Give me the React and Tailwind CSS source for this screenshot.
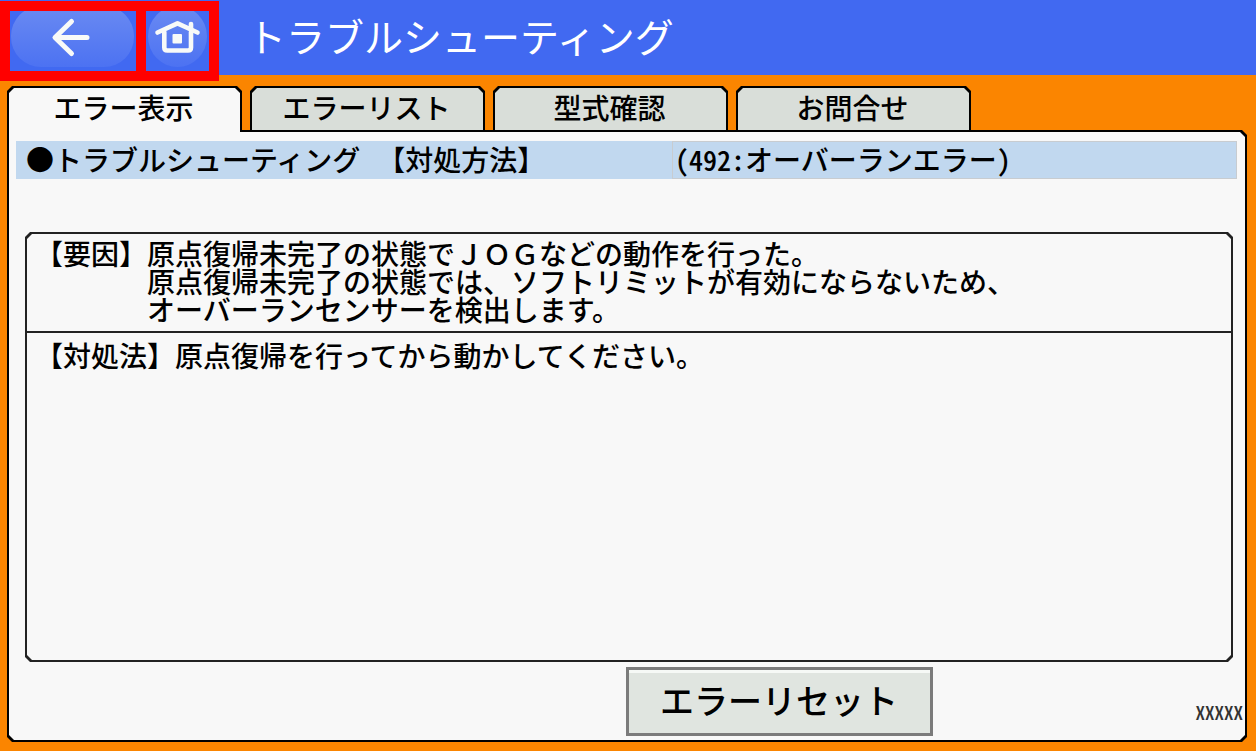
const TABS = ['エラー表示', 'エラーリスト', '型式確認', 'お問合せ'];

const OCTAGON =
  '[clip-path:polygon(5px_0,calc(100%-5px)_0,100%_5px,100%_calc(100%-5px),calc(100%-5px)_100%,5px_100%,0_calc(100%-5px),0_5px)]';
const PANEL_SHAPE =
  '[clip-path:polygon(0_0,calc(100%-5px)_0,100%_5px,100%_calc(100%-5px),calc(100%-5px)_100%,5px_100%,0_calc(100%-5px))]';
const TAB_SHAPE = '[clip-path:polygon(5px_0,calc(100%-5px)_0,100%_5px,100%_100%,0_100%,0_5px)]';

function BackIcon() {
  return (
    <svg viewBox="0 0 126 60" className="h-full w-full" aria-hidden="true">
      <defs>
        <linearGradient id="pill" x1="0" y1="0" x2="0" y2="1">
          <stop offset="0" stopColor="#6a8af2" />
          <stop offset="1" stopColor="#4c72f2" />
        </linearGradient>
      </defs>
      <rect x="1" y="-5" width="123" height="61" rx="30" fill="url(#pill)" />
      <path
        d="M61.500 10.500 45 26.500 61.500 42.500M46 26.500H77"
        fill="none"
        stroke="#f8faf8"
        strokeWidth="5"
        strokeLinecap="round"
        strokeLinejoin="round"
      />
    </svg>
  );
}

function HomeIcon() {
  return (
    <svg viewBox="0 0 63 60" className="h-full w-full" aria-hidden="true">
      <ellipse cx="31.500" cy="25.500" rx="29.500" ry="30.500" fill="url(#pill)" />
      <g fill="none" stroke="#f8faf8" strokeWidth="4.600" strokeLinecap="round" strokeLinejoin="round">
        <path d="M11.500 21.500 31.500 12.300 51.500 21.500" />
        <path d="M18.300 21V36.500Q18.300 39.500 21.300 39.500H42Q45 39.500 45 36.500V21" />
        <path d="M45 13V18" />
      </g>
      <rect x="26.500" y="23" width="9.500" height="9.500" rx="1" fill="#f8faf8" />
    </svg>
  );
}

function Tab({ label, active }) {
  return (
    <button
      type="button"
      role="tab"
      aria-selected={active}
      className={`h-[46px] w-[235px] bg-black px-[2px] pt-[2px] ${TAB_SHAPE} ${active ? '' : 'pb-[2px]'}`}
    >
      <span
        className={`flex h-full justify-center pr-[2px] text-[28px] leading-[38px] ${TAB_SHAPE} ${
          active ? 'bg-[#f8f8f8]' : 'bg-[#d9ded9]'
        }`}
      >
        {label}
      </span>
    </button>
  );
}

export default function App() {
  return (
    <div
      lang="ja"
      className="flex min-h-screen flex-col bg-[#fb8500] font-['Noto_Sans_CJK_JP',sans-serif] font-medium text-black [text-spacing-trim:space-all]"
    >
      <header className="flex h-[75px] items-start bg-[#4169f1]">
        <nav className="mt-px flex shrink-0 gap-[10px] bg-[#ff0000] p-[10px]">
          <button type="button" aria-label="戻る" className="h-[60px] w-[126px] bg-[#4169f1]">
            <BackIcon />
          </button>
          <button type="button" aria-label="ホーム" className="h-[60px] w-[63px] bg-[#4169f1]">
            <HomeIcon />
          </button>
        </nav>
        <h1 className="ml-7 text-[39px] leading-[70px] font-normal text-white">トラブルシューティング</h1>
      </header>

      <main className="flex grow flex-col pt-[11px] pr-[9px] pb-[9px] pl-[7px]">
        <div role="tablist" className="z-10 -mb-[2px] flex gap-2">
          {TABS.map((label, i) => (
            <Tab key={label} label={label} active={i === 0} />
          ))}
        </div>

        <section className={`flex grow flex-col bg-black p-[2px] ${PANEL_SHAPE}`}>
          <div className={`flex grow flex-col bg-[#f8f8f8] pt-[9px] ${PANEL_SHAPE}`}>
            <div className="mr-2 ml-[7px] flex h-[38px] bg-[#c1d8ef] text-[28px] leading-[36px]">
              <h2 className="flex w-[656px] shrink-0 gap-[17px] pl-[10px]">
                <span>●トラブルシューティング</span>
                <span>【対処方法】</span>
              </h2>
              <p className="grow border border-[#c8ccd0] pl-[2px] leading-[34px]">
                <span className="[font-feature-settings:'hwid']">(492:</span>オーバーランエラー
                <span className="[font-feature-settings:'hwid']">)</span>
              </p>
            </div>

            <div className={`mt-[53px] mr-3 ml-4 flex grow flex-col bg-[#222] p-[2px] ${OCTAGON}`}>
              <div className={`flex grow flex-col bg-[#f8f8f8] text-[28px] leading-[28px] ${OCTAGON}`}>
                <div className="flex h-[99px] border-b-2 border-[#222] pt-[5px] pl-2">
                  <span>【要因】</span>
                  <p>
                    原点復帰未完了の状態でＪＯＧなどの動作を行った。
                    <br />
                    原点復帰未完了の状態では、ソフトリミットが有効にならないため、
                    <br />
                    オーバーランセンサーを検出します。
                  </p>
                </div>
                <p className="pt-2 pl-2">【対処法】原点復帰を行ってから動かしてください。</p>
              </div>
            </div>

            <footer className="grid grid-cols-[1fr_307px_1fr] items-center pt-[5px] pb-1">
              <button
                type="button"
                className="col-start-2 ml-[152px] h-[69px] w-[307px] border-[3px] border-[#7b7b7b] bg-[#e0e5e0] pb-1 text-[34px] shadow-[inset_0_3px_0_#f6f9f6]"
              >
                エラーリセット
              </button>
              <span className="pt-5 pr-[2px] text-right text-[19px] leading-6 text-[#333] [font-feature-settings:'hwid']">
                XXXXX
              </span>
            </footer>
          </div>
        </section>
      </main>
    </div>
  );
}
